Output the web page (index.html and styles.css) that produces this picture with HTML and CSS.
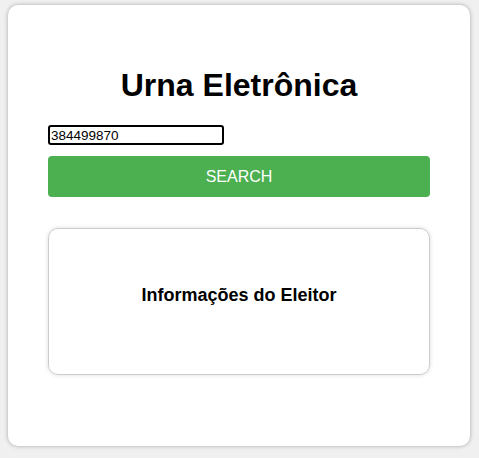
FILE: index.html
```html
<!DOCTYPE html>
<html lang="pt">
<head>
<meta charset="utf-8">
<link rel="stylesheet" href="styles.css">
</head>
<body>
  <div class="card">
    <h1 class="title">Urna Eletrônica</h1>
    <input class="cpf" type="text" value="384499870">
    <button class="search">SEARCH</button>
    <div class="info">
      <h3 class="info-title">Informações do Eleitor</h3>
    </div>
  </div>
</body>
</html>
```

FILE: styles.css
```css
html, body {
  margin: 0;
  background: #f0f0f0;
  font-family: "Liberation Sans", Arial, sans-serif;
}
body {
  padding: 5px 9px 12px 8px;
}
.card {
  background: #fff;
  border-radius: 10px;
  box-shadow: 0 0 4px rgba(0,0,0,0.3);
  padding: 40px 40px 71px;
  display: flex;
  flex-direction: column;
  align-items: flex-start;
}
.title {
  align-self: stretch;
  text-align: center;
  font-size: 32px;
  font-weight: bold;
  margin: 22px 0 21px;
  color: #000;
}
.cpf {
  width: 176px;
  height: 20px;
  box-sizing: border-box;
  border: 2px solid #000;
  border-radius: 3px;
  padding: 1px 1px;
  font-family: "Liberation Sans", Arial, sans-serif;
  font-size: 13.5px;
  color: #000;
  outline: none;
  margin: 0;
}
.search {
  align-self: stretch;
  margin-top: 11px;
  height: 41px;
  background: #4caf50;
  color: #fff;
  border: none;
  border-radius: 4px;
  font-family: "Liberation Sans", Arial, sans-serif;
  font-size: 16px;
}
.info {
  align-self: stretch;
  margin-top: 31px;
  height: 147px;
  box-sizing: border-box;
  border: 1px solid #ccc;
  border-radius: 10px;
  box-shadow: 0 0 4px rgba(0,0,0,0.15);
  padding-top: 56px;
  text-align: center;
}
.info-title {
  margin: 0;
  font-size: 18px;
  font-weight: bold;
  color: #000;
}
```
